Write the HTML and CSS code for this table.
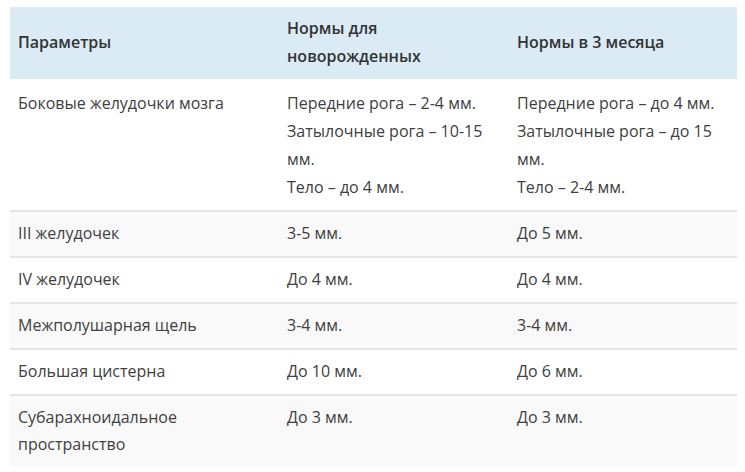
FILE: index.html
```html
<!DOCTYPE html>
<html lang="ru">
<head>
<meta charset="utf-8">
<link rel="stylesheet" href="styles.css">
</head>
<body>
<table class="norms">
  <colgroup>
    <col class="c1"><col class="c2"><col class="c3">
  </colgroup>
  <thead>
    <tr>
      <th>Параметры</th>
      <th>Нормы для новорожденных</th>
      <th>Нормы в 3 месяца</th>
    </tr>
  </thead>
  <tbody>
    <tr>
      <td>Боковые желудочки мозга</td>
      <td>Передние рога – 2-4 мм.<br>Затылочные рога – 10-15 мм.<br>Тело – до 4 мм.</td>
      <td>Передние рога – до 4 мм.<br>Затылочные рога – до 15 мм.<br>Тело – 2-4 мм.</td>
    </tr>
    <tr>
      <td>III желудочек</td>
      <td>3-5 мм.</td>
      <td>До 5 мм.</td>
    </tr>
    <tr>
      <td>IV желудочек</td>
      <td>До 4 мм.</td>
      <td>До 4 мм.</td>
    </tr>
    <tr>
      <td>Межполушарная щель</td>
      <td>3-4 мм.</td>
      <td>3-4 мм.</td>
    </tr>
    <tr>
      <td>Большая цистерна</td>
      <td>До 10 мм.</td>
      <td>До 6 мм.</td>
    </tr>
    <tr>
      <td>Субарахноидальное пространство</td>
      <td>До 3 мм.</td>
      <td>До 3 мм.</td>
    </tr>
  </tbody>
</table>
</body>
</html>
```
FILE: styles.css
```css
html, body {
  margin: 0;
  background: #ffffff;
}
body {
  padding: 7px 8px 0 10px;
  font-family: "Open Sans", "Noto Sans", sans-serif;
  font-size: 16px;
  color: #404040;
}
.norms {
  width: 727px;
  table-layout: fixed;
  border-collapse: collapse;
  border-spacing: 0;
}
.c1 { width: 269px; }
.c2 { width: 230px; }
.c3 { width: 228px; }
.norms th, .norms td {
  text-align: left;
  vertical-align: top;
  padding: 8px 8px 8.3px;
  line-height: 27.7px;
}
.norms th {
  background: #daebf5;
  font-weight: 600;
  color: #333333;
  vertical-align: middle;
  padding: 8px 8px 9px;
}
.norms td {
  border-top: 2px solid #e6e6e6;
  font-weight: 400;
}
.norms tbody tr:first-child td {
  border-top: 0;
  padding-top: 11px;
}
.norms tbody tr:nth-child(even) td {
  background: #f9f9f9;
}
```
